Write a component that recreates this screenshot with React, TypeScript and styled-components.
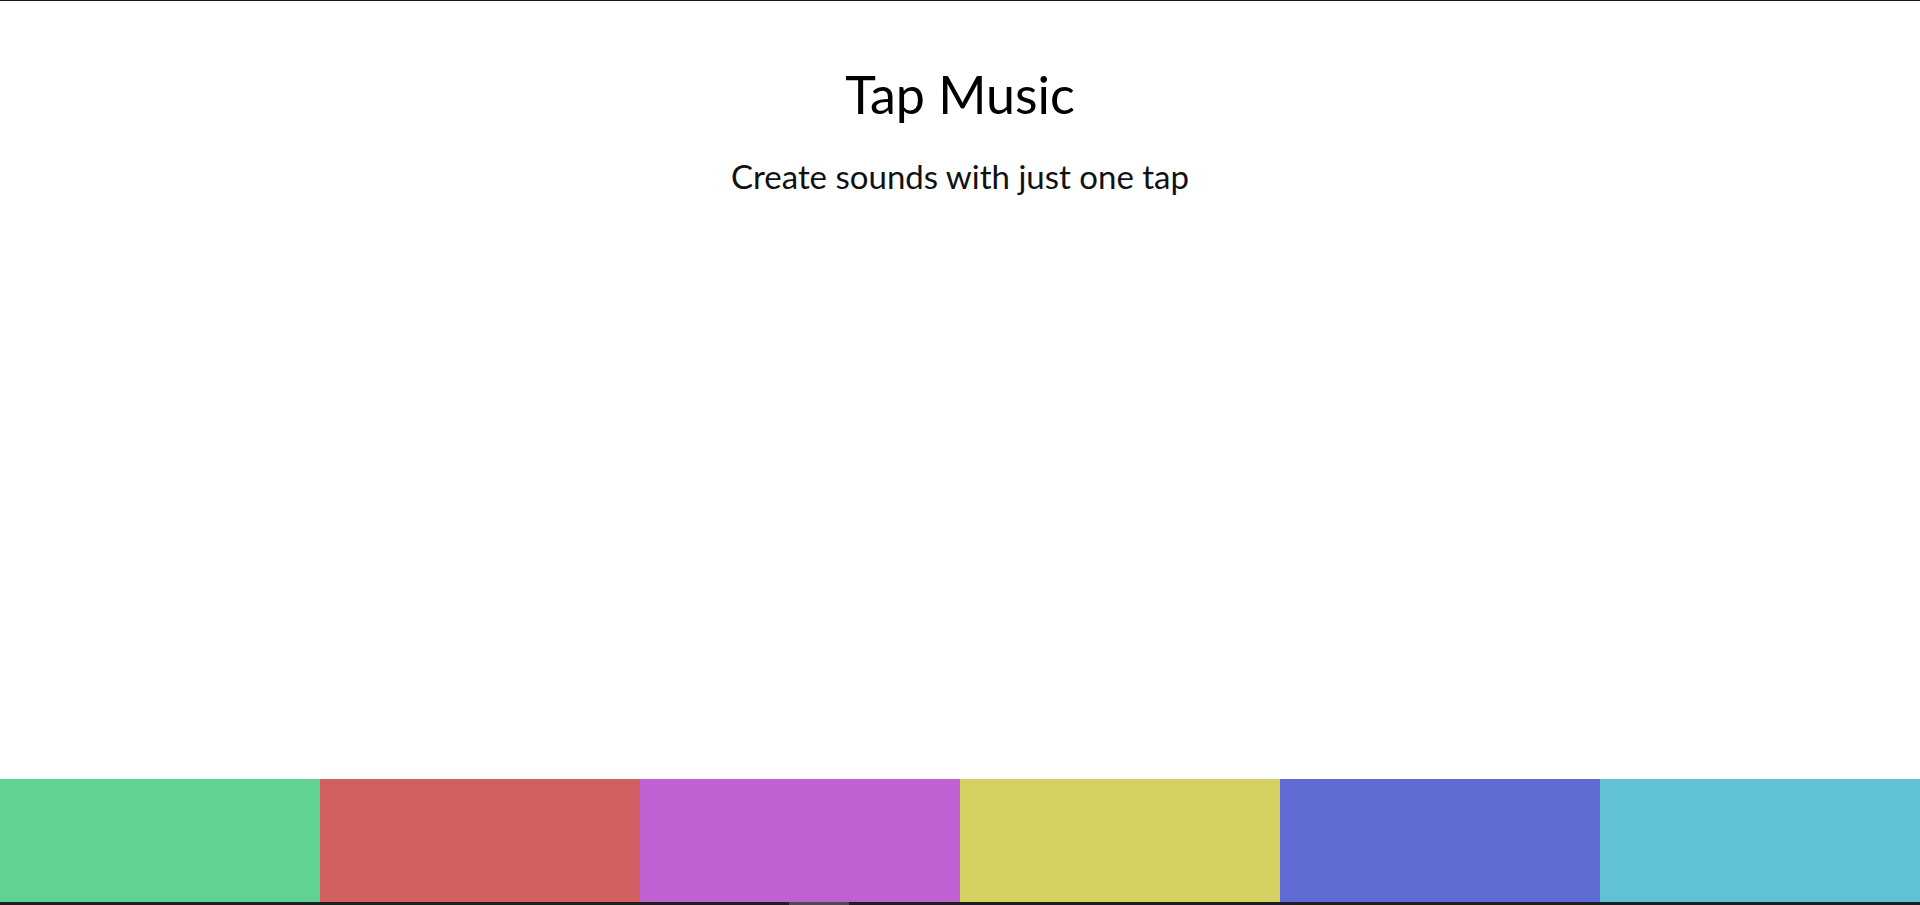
import styled, { createGlobalStyle } from "styled-components";

const GlobalStyle = createGlobalStyle`
  * {
    margin: 0;
    padding: 0;
    box-sizing: border-box;
  }
  body {
    font-family: "Lato", "Open Sans", sans-serif;
    background: white;
  }
`;

const Page = styled.div`
  height: 100vh;
  display: flex;
  flex-direction: column;
  border-top: 1px solid #1a1a1a;
`;

const Header = styled.header`
  flex: 1;
  display: flex;
  flex-direction: column;
  align-items: center;
  padding-top: 67px;
`;

const Title = styled.h1`
  font-weight: 400;
  font-size: 52px;
  line-height: 1;
  color: #000;
`;

const Subtitle = styled.p`
  margin-top: 40px;
  font-size: 33px;
  line-height: 1;
  color: #111;
`;

const Pads = styled.div`
  display: grid;
  grid-template-columns: repeat(6, 1fr);
  height: 123px;
`;

const Pad = styled.div<{ $color: string }>`
  background: ${(p) => p.$color};
  cursor: pointer;
`;

const BottomBar = styled.div`
  height: 3px;
  background: #1f1f22;
  display: flex;
  padding-left: 789px;
`;

const Handle = styled.span`
  width: 60px;
  background: #4b4b50;
`;

const colors = ["#60d394", "#d36060", "#c060d3", "#d3d160", "#606bd3", "#60c2d3"];

export default function App() {
  return (
    <>
      <GlobalStyle />
      <Page>
        <Header>
          <Title>Tap Music</Title>
          <Subtitle>Create sounds with just one tap</Subtitle>
        </Header>
        <Pads>
          {colors.map((c) => (
            <Pad key={c} $color={c} />
          ))}
        </Pads>
        <BottomBar>
          <Handle />
        </BottomBar>
      </Page>
    </>
  );
}
